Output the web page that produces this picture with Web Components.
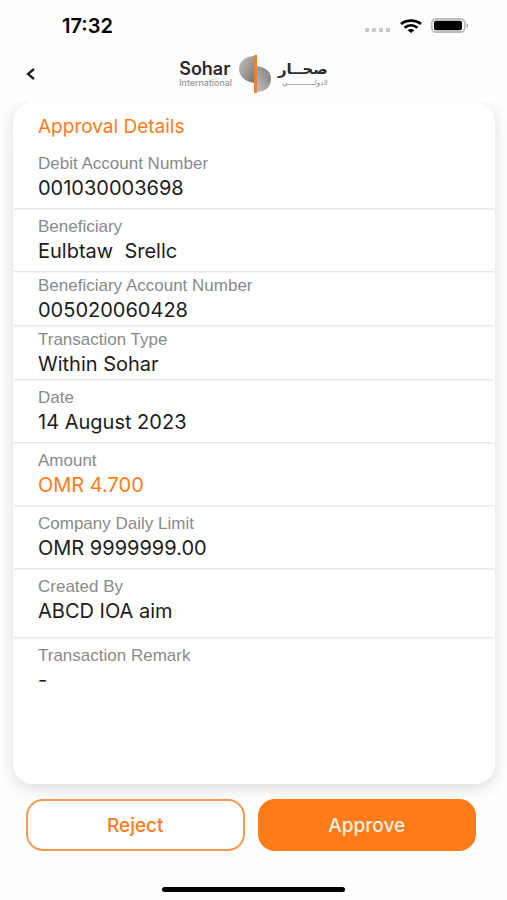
<!DOCTYPE html>
<html lang="en">
<head>
<meta charset="utf-8">
<meta name="viewport" content="width=device-width, initial-scale=1">
<title>Approval Details</title>
<style>
  body {
    margin: 0;
    background: #fefefe;
    color: #1c1c1c;
    font-family: Inter, "Liberation Sans", sans-serif;
    --orange: #ff7c1a;
    --line: #e6e6e6;
    --label: #8a8a8a;
  }
</style>
</head>
<body>
<approval-page></approval-page>

<script>
const define = (name, html, setup) => {
  const template = document.createElement('template');
  template.innerHTML = html;

  window.customElements.define(name, class extends HTMLElement {
    constructor() {
      super();
      this.attachShadow({ mode: 'open' });
      this.shadowRoot.append(template.content.cloneNode(true));
      if (setup) setup(this);
    }
  });
};

define('status-bar', `
  <style>
    :host {
      display: flex;
      align-items: center;
      justify-content: space-between;
      box-sizing: border-box;
      height: 45px;
      padding: 7px 38px 0 62px;
    }

    time {
      font-size: 20px;
      font-weight: 600;
      color: #000;
    }

    .icons {
      display: flex;
      align-items: center;
      gap: 8px;
    }

    svg {
      display: block;
    }
  </style>

  <time>17:32</time>
  <div class="icons">
    <svg width="28" height="18" viewBox="0 0 28 18" fill="#c9c9c9">
      <rect x="1" y="11" width="4" height="4" rx="1"/>
      <rect x="8" y="11" width="4" height="4" rx="1"/>
      <rect x="15" y="11" width="4" height="4" rx="1"/>
      <rect x="22" y="11" width="4" height="4" rx="1"/>
    </svg>
    <svg width="22" height="15" viewBox="0 0 22 15" fill="none" stroke="#000" stroke-width="2.8">
      <path d="M1 5C6.600.500 15.400.500 21 5"/>
      <path d="M4.600 8.800C8.400 5.600 13.600 5.600 17.400 8.800"/>
      <path d="M11 14L7.600 11.200C9.600 9.600 12.400 9.600 14.400 11.200Z" fill="#000" stroke="none"/>
    </svg>
    <svg width="39" height="16" viewBox="0 0 39 16">
      <rect x="1.800" y="1" width="33" height="13" rx="4.500" fill="#fff" stroke="#bdbdbd" stroke-width="2"/>
      <rect x="4" y="2.800" width="28" height="9.400" rx="2" fill="#000"/>
      <path d="M36.600 5.400C38.600 5.900 38.600 9.100 36.600 9.600Z" fill="#9c9c9c"/>
    </svg>
  </div>
`);

define('bank-logo', `
  <style>
    :host {
      display: flex;
      align-items: center;
      gap: 6px;
      color: #2b2b2b;
    }

    .word {
      display: flex;
      flex-direction: column;
    }

    .name {
      font-size: 18px;
      line-height: 18px;
      font-weight: 600;
    }

    .sub {
      font-size: 9px;
      line-height: 10px;
      color: #888;
    }

    .arabic {
      font-family: "DejaVu Sans", sans-serif;
    }

    .arabic .name {
      font-size: 15px;
      font-weight: 700;
    }

    .arabic .sub {
      font-size: 7px;
    }

    svg {
      display: block;
    }
  </style>

  <div class="word">
    <span class="name">Sohar</span>
    <span class="sub">International</span>
  </div>
  <svg width="34" height="40" viewBox="0 0 34 40">
    <defs>
      <linearGradient id="left" x1="0" y1="0" x2="1" y2="1">
        <stop offset="0" stop-color="#c8c4c2"/>
        <stop offset="1" stop-color="#77706d"/>
      </linearGradient>
      <linearGradient id="right" x1="1" y1="0" x2="0" y2="1">
        <stop offset="0" stop-color="#827b78"/>
        <stop offset="1" stop-color="#c4bfbd"/>
      </linearGradient>
    </defs>
    <path d="M17 2C7 2 1 8 1 15C1 22 7 28 17 29Z" fill="url(#left)"/>
    <path d="M18 12C28 13 33 18 33 25C33 32 28 38 18 38Z" fill="url(#right)"/>
    <rect x="16" y="1" width="3" height="38" fill="#f58025"/>
  </svg>
  <div class="word arabic" lang="ar" dir="rtl">
    <span class="name">صحــار</span>
    <span class="sub">الدولـــــــــــــي</span>
  </div>
`);

define('app-header', `
  <style>
    :host {
      display: grid;
      grid-template-columns: 1fr auto 1fr;
      align-items: center;
      height: 57px;
    }

    button {
      justify-self: start;
      margin-left: 18px;
      padding: 6px 8px;
      border: 0;
      background: none;
    }

    svg {
      display: block;
    }
  </style>

  <button type="button" aria-label="Back">
    <svg width="9" height="12" viewBox="0 0 9 12" fill="none" stroke="#222" stroke-width="2.4">
      <path d="M8 1L2 6L8 11"/>
    </svg>
  </button>
  <bank-logo></bank-logo>
`);

define('detail-row', `
  <style>
    :host {
      display: block;
      padding: 6px 24px 8px;
      border-bottom: 1px solid var(--line);
      box-shadow: 0 1px 1px #f4f4f4;
    }

    :host([compact]) {
      padding: 2px 24px 3px;
    }

    :host([roomy]) {
      padding-bottom: 14px;
    }

    :host(:last-of-type) {
      border-bottom: 0;
      box-shadow: none;
    }

    dl, dd {
      margin: 0;
    }

    dt {
      font-family: "Liberation Sans", sans-serif;
      font-size: 17px;
      line-height: 24px;
      color: var(--label);
    }

    dd {
      font-size: 20px;
      line-height: 24px;
      white-space: pre;
    }

    :host([accent]) dd {
      color: var(--orange);
    }
  </style>

  <dl>
    <dt></dt>
    <dd><slot></slot></dd>
  </dl>
`, (el) => {
  el.shadowRoot.querySelector('dt').textContent = el.getAttribute('label');
});

define('detail-card', `
  <style>
    :host {
      display: block;
      flex: 1;
      box-sizing: border-box;
      margin: 0 12px 0 13px;
      padding: 12px 1px 0;
      border-radius: 20px;
      background: #fff;
      box-shadow: 0 4px 16px rgba(0, 0, 0, 0.14);
      clip-path: inset(0 -20px -20px -20px);
    }

    h1 {
      margin: 0 0 6px;
      padding: 0 24px;
      font-size: 19px;
      line-height: 26px;
      font-weight: 400;
      color: var(--orange);
    }
  </style>

  <h1><slot name="title"></slot></h1>
  <slot></slot>
`);

define('action-button', `
  <style>
    :host {
      display: block;
      flex: 1;
    }

    button {
      width: 100%;
      height: 52px;
      border: 2px solid #f79a55;
      border-radius: 17px;
      background: #fff;
      color: var(--orange);
      font-family: inherit;
      font-size: 19px;
      font-weight: 500;
    }

    :host([primary]) button {
      border-color: var(--orange);
      background: var(--orange);
      color: #fff0df;
    }
  </style>

  <button type="button"><slot></slot></button>
`);

define('approval-page', `
  <style>
    :host {
      display: flex;
      flex-direction: column;
      min-height: 100vh;
    }

    footer {
      display: flex;
      gap: 13px;
      padding: 15px 31px 0 26px;
    }

    .home {
      align-self: center;
      width: 36%;
      height: 5px;
      margin: 36px 0 8px;
      border-radius: 3px;
      background: #000;
    }
  </style>

  <status-bar></status-bar>
  <app-header></app-header>
  <detail-card></detail-card>
  <footer>
    <action-button>Reject</action-button>
    <action-button primary>Approve</action-button>
  </footer>
  <div class="home"></div>
`, (el) => {
  const rows = [
    ['Debit Account Number', '001030003698'],
    ['Beneficiary', 'Eulbtaw  Srellc'],
    ['Beneficiary Account Number', '005020060428', 'compact'],
    ['Transaction Type', 'Within Sohar', 'compact'],
    ['Date', '14 August 2023'],
    ['Amount', 'OMR 4.700', 'accent'],
    ['Company Daily Limit', 'OMR 9999999.00'],
    ['Created By', 'ABCD IOA aim', 'roomy'],
    ['Transaction Remark', '-'],
  ];

  el.shadowRoot.querySelector('detail-card').innerHTML =
    '<span slot="title">Approval Details</span>' +
    rows.map(([label, value, kind = '']) =>
      `<detail-row label="${label}" ${kind}>${value}</detail-row>`).join('');
});
</script>
</body>
</html>
